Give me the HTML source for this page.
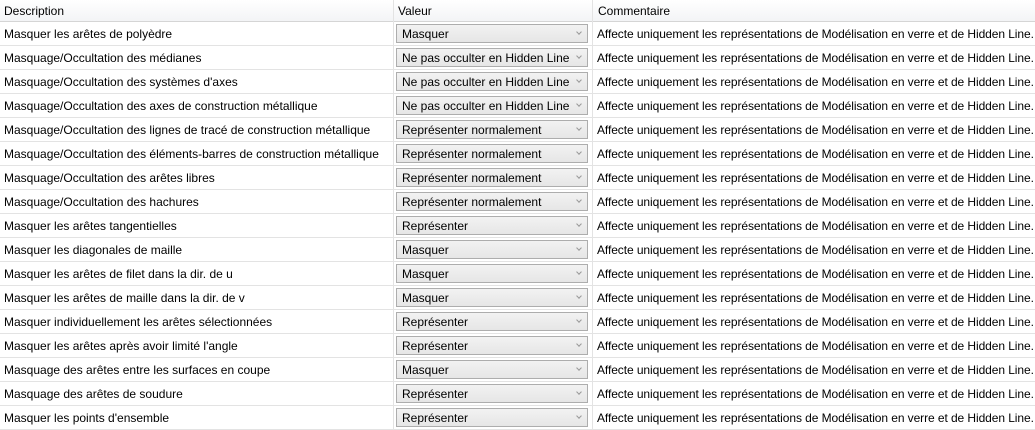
<!DOCTYPE html><html><head><style>
body{margin:0;width:1035px;height:430px;overflow:hidden;background:#fff;font-family:"Liberation Sans",sans-serif;font-size:12px;color:#000}
.hdr{position:absolute;left:0;top:0;width:1035px;height:21px;background:linear-gradient(#fff,#f3f4f6);border-bottom:1px solid #d5d5d5}
.hdr div{position:absolute;top:4px}
.vl{position:absolute;top:0;width:1px;height:430px;background:#e3e3e3}
.row{position:absolute;left:0;width:1035px;height:24px;border-bottom:1px solid #e3e3e3;box-sizing:border-box}
.row .d{position:absolute;left:4px;top:5px;white-space:nowrap}
.row .c{position:absolute;left:597px;top:5px;white-space:nowrap;letter-spacing:-0.08px}
.cb{position:absolute;left:396px;top:2px;width:192px;height:19px;box-sizing:border-box;border:1px solid #adadad;background:linear-gradient(#f2f2f2,#e6e6e6)}
.cb span{position:absolute;left:5px;top:2px;white-space:nowrap}
.cb i{position:absolute;right:6px;top:5px;width:3px;height:3px;border-right:1px solid #999;border-bottom:1px solid #999;transform:rotate(45deg)}
</style></head><body>
<div class="hdr"><div style="left:4px">Description</div><div style="left:398px">Valeur</div><div style="left:598px">Commentaire</div></div>
<div class="vl" style="left:393px"></div><div class="vl" style="left:592px"></div>
<div id="rows"></div>
<script>
var d=[["Masquer les arêtes de polyèdre","Masquer"],["Masquage/Occultation des médianes","Ne pas occulter en Hidden Line"],["Masquage/Occultation des systèmes d'axes","Ne pas occulter en Hidden Line"],["Masquage/Occultation des axes de construction métallique","Ne pas occulter en Hidden Line"],["Masquage/Occultation des lignes de tracé de construction métallique","Représenter normalement"],["Masquage/Occultation des éléments-barres de construction métallique","Représenter normalement"],["Masquage/Occultation des arêtes libres","Représenter normalement"],["Masquage/Occultation des hachures","Représenter normalement"],["Masquer les arêtes tangentielles","Représenter"],["Masquer les diagonales de maille","Masquer"],["Masquer les arêtes de filet dans la dir. de u","Masquer"],["Masquer les arêtes de maille dans la dir. de v","Masquer"],["Masquer individuellement les arêtes sélectionnées","Représenter"],["Masquer les arêtes après avoir limité l'angle","Représenter"],["Masquage des arêtes entre les surfaces en coupe","Masquer"],["Masquage des arêtes de soudure","Représenter"],["Masquer les points d'ensemble","Représenter"]];
var h="";d.forEach(function(r,i){h+='<div class="row" style="top:'+(22+i*24)+'px"><div class="d">'+r[0]+'</div><div class="cb"><span>'+r[1]+'</span><i></i></div><div class="c">Affecte uniquement les représentations de Modélisation en verre et de Hidden Line.</div></div>'});
document.getElementById("rows").innerHTML=h;
</script>
</body></html>
